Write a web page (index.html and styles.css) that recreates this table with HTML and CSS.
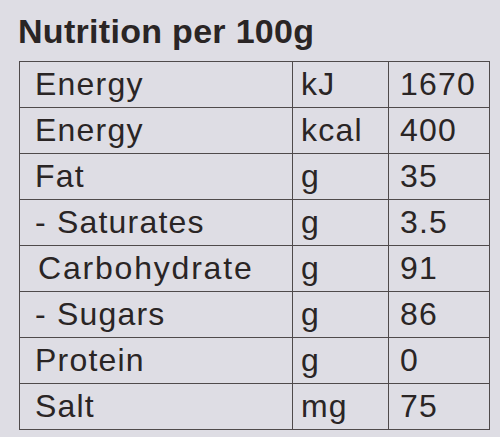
FILE: index.html
```html
<!DOCTYPE html>
<html>
<head>
<meta charset="utf-8">
<link rel="stylesheet" href="styles.css">
</head>
<body>
<div class="label">
  <h1 class="title">Nutrition per 100g</h1>
  <table class="facts">
    <colgroup><col class="c-name"><col class="c-unit"><col class="c-val"></colgroup>
    <tr><td>Energy</td><td class="unit">kJ</td><td class="val">1670</td></tr>
    <tr><td>Energy</td><td class="unit">kcal</td><td class="val">400</td></tr>
    <tr><td>Fat</td><td class="unit">g</td><td class="val">35</td></tr>
    <tr><td>- Saturates</td><td class="unit">g</td><td class="val">3.5</td></tr>
    <tr><td class="wide">Carbohydrate</td><td class="unit">g</td><td class="val">91</td></tr>
    <tr><td>- Sugars</td><td class="unit">g</td><td class="val">86</td></tr>
    <tr><td>Protein</td><td class="unit">g</td><td class="val">0</td></tr>
    <tr><td>Salt</td><td class="unit">mg</td><td class="val">75</td></tr>
  </table>
</div>
</body>
</html>
```
FILE: styles.css
```css
html, body {
  margin: 0;
  padding: 0;
  background: #dedde4;
}
body {
  width: 500px;
  height: 437px;
  overflow: hidden;
  font-family: "Liberation Sans", Arial, sans-serif;
  color: #2a2525;
}
.label {
  padding: 12px 0 0 18px;
}
.title {
  margin: 0;
  font-size: 34px;
  font-weight: bold;
  line-height: 38px;
  letter-spacing: 0.3px;
}
.facts {
  margin-top: 11px;
  margin-left: 1px;
  border-collapse: collapse;
  table-layout: fixed;
  width: 470px;
}
.c-name { width: 273px; }
.c-unit { width: 96px; }
.c-val { width: 101px; }
.facts td {
  border: 1.5px solid #4f4a4b;
  height: 45px;
  padding: 0 0 0 15px;
  font-size: 32px;
  line-height: 45px;
  letter-spacing: 1.2px;
  white-space: nowrap;
  vertical-align: middle;
}
.facts td.unit { padding-left: 8px; }
.facts td.val { padding-left: 11px; }
.facts td.wide { padding-left: 18px; letter-spacing: 1.8px; }
```
